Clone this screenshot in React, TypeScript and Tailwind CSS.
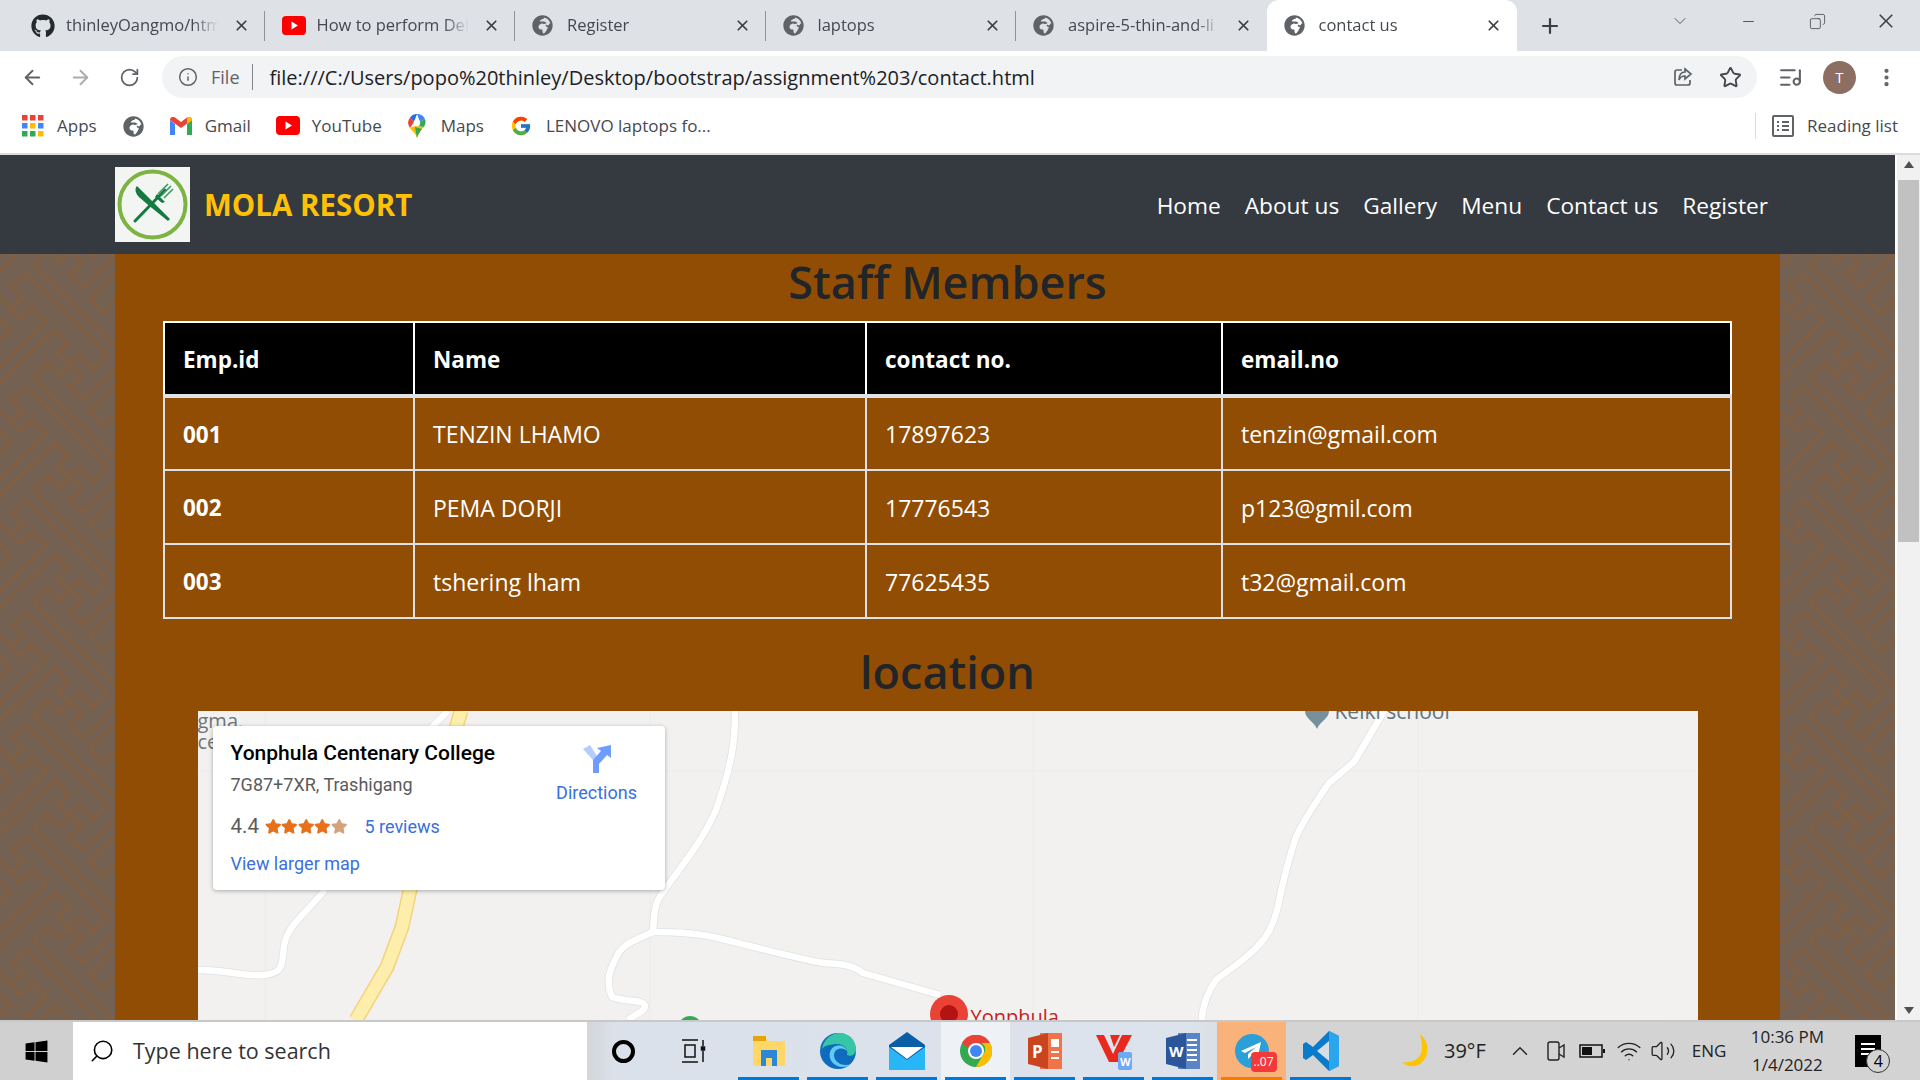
import { ArrowLeft, ArrowRight, ChevronDown, Copy, Info, ListMusic, Minus, MoreVertical, Plus, RotateCw, Search, Star, Volume2, Wifi, X, ChevronUp } from 'lucide-react'
import { FaGithub, FaGlobeAfrica, FaStar, FaWindows } from 'react-icons/fa'
import { FcGoogle } from 'react-icons/fc'
import { VscChromeClose } from 'react-icons/vsc'

const ui = 'font-["Open_Sans",sans-serif]'

const tabs = ['thinleyOangmo/html', 'How to perform Dele', 'Register', 'laptops', 'aspire-5-thin-and-li', 'contact us']

const staff = [
  { id: '001', name: 'TENZIN LHAMO', phone: '17897623', email: 'tenzin@gmail.com' },
  { id: '002', name: 'PEMA DORJI', phone: '17776543', email: 'p123@gmil.com' },
  { id: '003', name: 'tshering lham', phone: '77625435', email: 't32@gmail.com' },
]

const navLinks = ['Home', 'About us', 'Gallery', 'Menu', 'Contact us', 'Register']

const YoutubeIcon = ({ size = 24 }: { size?: number }) => (
  <svg width={size} height={size * 0.8} viewBox="0 0 24 19">
    <rect width="24" height="19" rx="4" fill="#f00" />
    <path d="M9.5 5.5l6.5 4-6.5 4z" fill="#fff" />
  </svg>
)

const TabFavicon = ({ index }: { index: number }) => {
  if (index === 0) return <FaGithub size={24} className="text-[#24292e]" />
  if (index === 1) return <YoutubeIcon />
  return <FaGlobeAfrica size={21} className="text-[#5f6368]" />
}

const ChromeTabs = () => (
  <div className="flex h-[51px] shrink-0 items-center bg-[#dee1e6] pl-[14px]">
    {tabs.map((tab, i) => {
      const active = i === 5
      return (
        <div
          key={tab}
          className={`relative flex h-full w-[250.5px] items-center pl-[17px] pr-[15px] ${active ? 'rounded-t-xl bg-white' : ''}`}
        >
          <div className="flex w-[35px] shrink-0 items-center">
            <TabFavicon index={i} />
          </div>
          <span className="w-[155px] overflow-hidden whitespace-nowrap text-[16.5px] text-[#45494f] [mask-image:linear-gradient(90deg,#000_82%,transparent_98%)]">
            {tab}
          </span>
          <X size={17} strokeWidth={2.4} className="ml-auto text-[#3c4043]" />
          {i < 4 && <div className="absolute right-0 top-[11px] h-[30px] w-px bg-[#8f9296]" />}
        </div>
      )
    })}
    <Plus size={24} strokeWidth={2.2} className="ml-[21px] text-[#3c4043]" />
    <div className="ml-auto flex items-center pb-[9px] text-[#3c4043]">
      <ChevronDown size={20} strokeWidth={1} className="mr-[50px]" />
      <Minus size={17} strokeWidth={1.2} className="mr-[52px]" />
      <Copy size={17} strokeWidth={1.1} className="mr-[50px] -scale-x-100" />
      <VscChromeClose size={20} className="mr-[24px]" />
    </div>
  </div>
)

const AddressBar = () => (
  <div className="flex h-[52px] shrink-0 items-center bg-white text-[#5f6368]">
    <ArrowLeft size={23} className="ml-[21px]" strokeWidth={2} />
    <ArrowRight size={23} className="ml-[25px] text-[#a8abaf]" strokeWidth={2} />
    <RotateCw size={21} className="ml-[27px]" strokeWidth={2} />
    <div className="ml-[22px] flex h-[42px] w-[1595px] items-center rounded-full bg-[#f1f3f4]">
      <Info size={20} strokeWidth={1.8} className="ml-[16px]" />
      <span className="ml-[13px] text-[18px] text-[#5f6368]">File</span>
      <div className="ml-[12px] h-[26px] w-px bg-[#80868b]" />
      <span className="ml-[17px] pt-[2px] text-[20px] text-[#202124]">
        file:///C:/Users/popo%20thinley/Desktop/bootstrap/assignment%203/contact.html
      </span>
      <svg viewBox="0 0 24 24" width="24" height="24" fill="none" stroke="currentColor" strokeWidth="1.7" className="ml-auto">
        <path d="M11 5H6a2 2 0 0 0-2 2v11a2 2 0 0 0 2 2h11a2 2 0 0 0 2-2v-3" />
        <path d="M14 4l6 5-6 5v-3c-3 0-5 1-6 4 0-5 2-8 6-8z" />
      </svg>
      <Star size={23} strokeWidth={2} className="ml-[24px] mr-[15px] text-[#45494f]" />
    </div>
    <ListMusic size={25} strokeWidth={2} className="ml-[21px]" />
    <div className="ml-[20px] flex h-[33px] w-[33px] items-center justify-center rounded-full bg-[#8d6e63] text-[15px] text-white">T</div>
    <MoreVertical size={23} className="ml-[19px]" strokeWidth={2.4} />
  </div>
)

const AppsIcon = () => (
  <svg width="22" height="22" viewBox="0 0 22 22">
    {[
      ['#ea4335', '#ea4335', '#ea4335'],
      ['#4285f4', '#fbbc04', '#4285f4'],
      ['#34a853', '#34a853', '#fbbc04'],
    ].map((row, y) =>
      row.map((c, x) => <rect key={`${x}${y}`} x={x * 8} y={y * 8} width="5.5" height="5.5" fill={c} />),
    )}
  </svg>
)

const GmailIcon = () => (
  <svg width="22" height="18" viewBox="0 0 22 18">
    <path d="M0 3v15h5V7z" fill="#4285f4" />
    <path d="M17 7v11h5V3z" fill="#34a853" />
    <path d="M0 3l11 8 11-8c0-3-3-4-5-2.5L11 5 5 .5C3-1 0 0 0 3z" fill="#ea4335" />
    <path d="M17 .5V7l5-4c0-3-3-4-5-2.5z" fill="#fbbc04" />
  </svg>
)

const MapsIcon = () => (
  <svg width="18" height="24" viewBox="0 0 18 24">
    <path d="M9 0a9 9 0 0 0-7 3.4L6 8z" fill="#1a73e8" />
    <path d="M2 3.4A9 9 0 0 0 2 14l4-6z" fill="#ea4335" />
    <path d="M9 0a9 9 0 0 1 8 5l-5 3z" fill="#4285f4" />
    <path d="M17 5a9 9 0 0 1-1 8L7 12l5-4z" fill="#34a853" />
    <path d="M2 14c3 4 6 6 7 10 1-4 3-6 5-9l2-2-9-1z" fill="#fbbc04" />
    <path d="M9 24c1-4 3-6 5-9L7 13z" fill="#34a853" />
    <circle cx="9" cy="9" r="3.2" fill="#fff" />
  </svg>
)

const Bookmarks = () => (
  <div className="flex h-[52px] shrink-0 items-center border-b-2 border-[#dcdcdc] pb-[4px] text-[17px] text-[#45494f]">
    <div className="ml-[22px]"><AppsIcon /></div>
    <span className="ml-[13px]">Apps</span>
    <FaGlobeAfrica size={21} className="ml-[26px] text-[#5f6368]" />
    <div className="ml-[26px]"><GmailIcon /></div>
    <span className="ml-[13px]">Gmail</span>
    <div className="ml-[25px]"><YoutubeIcon /></div>
    <span className="ml-[12px]">YouTube</span>
    <div className="ml-[26px]"><MapsIcon /></div>
    <span className="ml-[15px]">Maps</span>
    <FcGoogle size={22} className="ml-[26px]" />
    <span className="ml-[14px]">LENOVO laptops fo...</span>
    <div className="ml-auto h-[26px] w-px bg-[#dadce0]" />
    <svg width="22" height="24" viewBox="0 0 22 24" fill="none" stroke="#5f6368" strokeWidth="2" className="ml-[16px]">
      <rect x="1" y="2" width="20" height="20" rx="1" />
      <path d="M5 8h2M10 8h7M5 12h2M10 12h7M5 16h2M10 16h7" />
    </svg>
    <span className="ml-[13px] mr-[22px]">Reading list</span>
  </div>
)

const LogoMark = () => (
  <svg width="75" height="75" viewBox="0 0 75 75" className="shrink-0">
    <rect width="75" height="75" fill="#f3f5f3" />
    <circle cx="37.5" cy="37.5" r="33" fill="none" stroke="#7cb342" strokeWidth="4" />
    <path d="M55 52L22 19c-3 3-1 8 2 11l8 7 21 17z" fill="#137a42" />
    <path d="M20 54l30-31" stroke="#137a42" strokeWidth="3" strokeLinecap="round" />
    <path d="M46 29l10-10M49 31l9-9M43 27l10-10" stroke="#3c9a62" strokeWidth="1.6" />
    <path d="M42 27l8 8-3 1-7-6z" fill="#137a42" />
  </svg>
)

const Navbar = () => (
  <nav className="flex h-[99px] items-center bg-[#343a40] pl-[115px] pr-[127px]">
    <LogoMark />
    <span className="ml-[14px] mt-[2px] text-[29.5px] font-bold text-[#ffc107]">MOLA RESORT</span>
    <ul className="ml-auto mt-[3px] flex gap-[24px] text-[22.7px] text-white">
      {navLinks.map((l) => (
        <li key={l}>{l}</li>
      ))}
    </ul>
  </nav>
)

const keyLines = [
  'M-5 390L165 228 207 268 172 298 245 365 208 398 252 437 360 329',
  'M78 60L37 100 70 130 35 165 -5 125',
  'M35 165L60 195 97 158 138 200 -5 343',
  'M100 370L143 327 178 362 240 300 278 345 322 300 78 60',
  'M100 370L360 630',
  'M360 45L270 130 310 178 360 128',
  'M-5 190L30 225 -5 260',
].join(' ')

const patternRows = [-2, -1, 0, 1, 2, 3, 4, 5, 6, 7]

const SidePattern = ({ shift }: { shift: number }) => (
  <svg className="h-full w-[115px] shrink-0 bg-[#746152]" aria-hidden="true">
    <g fill="none" stroke="#835f42" strokeWidth="9">
      {patternRows.map((row) => (
        <path key={row} d={keyLines} transform={`translate(${shift} ${row * 112.67}) scale(0.3333)`} />
      ))}
    </g>
  </svg>
)

const StaffTable = () => (
  <table className="w-[1569px] table-fixed border-collapse border-2 border-white text-[23px] text-white">
    <colgroup>
      <col className="w-[250px]" />
      <col className="w-[452px]" />
      <col className="w-[356px]" />
      <col />
    </colgroup>
    <thead>
      <tr className="h-[74px] border-b-4 border-[#dee2e6] bg-black">
        {['Emp.id', 'Name', 'contact no.', 'email.no'].map((h) => (
          <th key={h} className="border-2 border-white px-[18px] pt-[2px] text-left text-[22.5px] font-bold">{h}</th>
        ))}
      </tr>
    </thead>
    <tbody>
      {staff.map((s) => (
        <tr key={s.id} className="h-[74px]">
          <th className="border-2 border-[#dee2e6] px-[18px] pt-[2px] text-left text-[22.5px] font-bold">{s.id}</th>
          <td className="border-2 border-[#dee2e6] px-[18px] pt-[2px]">{s.name}</td>
          <td className="border-2 border-[#dee2e6] px-[18px] pt-[2px]">{s.phone}</td>
          <td className="border-2 border-[#dee2e6] px-[18px] pt-[2px]">{s.email}</td>
        </tr>
      ))}
    </tbody>
  </table>
)

const whiteRoads = [
  'M250 0l-20 20',
  'M127 179C105 205 89 215 86 235C84 255 85 262 66 264C50 266 20 258 0 259',
  'M537 0C537 30 535 50 518 99C500 140 470 170 460 189C455 200 456 210 455 221C440 228 425 232 419 245C412 258 407 270 414 286C425 291 447 288 447 295C447 300 438 303 430 309',
  'M455 221C480 221 500 222 520 227C560 237 610 250 626 252C645 253 655 254 665 262L742 284',
  'M1186 0L1156 51 1131 72C1115 95 1105 110 1098 126C1090 150 1085 170 1080 195C1075 215 1070 225 1058 237C1040 255 1025 262 1018 269C1010 280 1004 296 1004 309',
]

const MapRoads = () => (
  <svg className="h-full w-full" viewBox="0 0 1500 309" preserveAspectRatio="none">
    <path d="M0 60h1500M67 0v309M452 0v309M835 0v309M1220 0v309" stroke="#ebebe9" strokeWidth="1" fill="none" />
    <path d="M263 0L212 179 204 216 189 256 158 309" fill="none" stroke="#f5d27e" strokeWidth="15" />
    <path d="M263 0L212 179 204 216 189 256 158 309" fill="none" stroke="#fdeeab" strokeWidth="12" />
    {whiteRoads.map((d) => (
      <path key={d} d={d} fill="none" stroke="#dfe1e3" strokeWidth="8" strokeLinejoin="round" />
    ))}
    {whiteRoads.map((d) => (
      <path key={d} d={d} fill="none" stroke="#fff" strokeWidth="6.5" strokeLinejoin="round" />
    ))}
  </svg>
)

const MapPins = () => (
  <>
    <span className="absolute left-0 top-[-1px] text-[20px] leading-[21px] text-[#70757a]">gma.<br />ce</span>
    <svg width="24" height="20" viewBox="0 0 24 20" className="absolute left-[1107px] top-0">
      <path d="M0 0h24c0 8-9 10-12 18C9 10 0 8 0 0z" fill="#78909c" />
    </svg>
    <span className="absolute left-[1137px] top-[-15px] text-[21px] text-[#5f7480]">Keiki school</span>
    <div className="absolute left-[480px] top-[305px] h-[12px] w-[24px] rounded-t-full bg-[#34a853]" />
    <div className="absolute left-[732px] top-[284px] h-[38px] w-[38px] rounded-full bg-[#ea4335]">
      <div className="mx-auto mt-[10px] h-[18px] w-[18px] rounded-full bg-[#b31412]" />
    </div>
    <span className="absolute left-[773px] top-[291px] text-[20px] text-[#c5221f]">Yonphula</span>
  </>
)

const InfoCard = () => (
  <div className="absolute left-[15px] top-[15px] flex h-[164px] w-[452px] rounded-sm bg-white pl-[18px] pt-[14px] font-['Roboto',sans-serif] shadow-[0_1px_4px_rgba(0,0,0,0.3)]">
    <div className="w-[326px]">
      <div className="text-[21px] font-medium leading-[26px] text-black">Yonphula Centenary College</div>
      <div className="mt-[6px] text-[18px] leading-[26px] text-[#5b5b5b]">7G87+7XR, Trashigang</div>
      <div className="mt-[14px] flex h-[28px] items-center">
        <span className="text-[20.5px] text-[#5b5b5b]">4.4</span>
        <div className="ml-[6px] flex text-[#e7711b]">
          {[0, 1, 2, 3].map((s) => <FaStar key={s} size={16.5} />)}
          <FaStar size={16.5} className="text-[#d6a27a]" />
        </div>
        <span className="ml-[17px] text-[18px] text-[#3a6fdc]">5 reviews</span>
      </div>
      <div className="mt-[10px] text-[18px] text-[#3a6fdc]">View larger map</div>
    </div>
    <div className="flex w-[80px] flex-col items-center text-[18px] text-[#3a6fdc]">
      <svg width="28" height="28" viewBox="0 0 28 28" className="mt-[5px]">
        <path d="M0 4l7-4 9 14v14h-6V15z" fill="#b6cdfb" />
        <path d="M10 28V15l8-9-4-3 14-3v13l-4-3-8 9v9z" fill="#6d9eff" />
      </svg>
      <span className="mt-[6px]">Directions</span>
    </div>
  </div>
)

const WinIcon = ({ name }: { name: string }) => {
  switch (name) {
    case 'cortana':
      return <div className="h-[23px] w-[23px] rounded-full border-[4px] border-black" />
    case 'view':
      return (
        <svg width="28" height="26" viewBox="0 0 28 26" fill="none" stroke="#111" strokeWidth="1.5">
          <path d="M1 2h16M1 24h16M4 7h10v12H4zM22 2v6M22 13v11" />
          <rect x="20.5" y="9" width="3" height="3" fill="#111" />
        </svg>
      )
    case 'folder':
      return (
        <svg width="32" height="30" viewBox="0 0 32 30">
          <path d="M0 2h13l3 3h16v25H0z" fill="#ffd767" />
          <path d="M0 0h13v5H0z" fill="#e5a50a" />
          <path d="M8 14h16v16h-5v-8h-6v8H8z" fill="#2b88d8" />
        </svg>
      )
    case 'edge':
      return (
        <svg width="36" height="36" viewBox="0 0 36 36">
          <circle cx="18" cy="18" r="18" fill="#0f6cbd" />
          <path d="M2 16C4 4 14 0 20 0c10 0 16 8 16 16 0 6-5 8-9 6 2-6-4-12-11-11C9 12 5 12 2 16z" fill="#34c6a6" />
          <path d="M14 22c0-6 8-9 13-4-2-7-14-8-17 1-2 8 4 15 13 15 3 0 6-1 8-3-9 3-17-2-17-9z" fill="#62c8f5" />
        </svg>
      )
    case 'mail':
      return (
        <svg width="36" height="38" viewBox="0 0 36 38">
          <path d="M18 0l18 13v25H0V13z" fill="#0a5ea8" />
          <path d="M2 15h32L18 27z" fill="#fff" />
          <path d="M0 15l18 13 18-13v23H0z" fill="#29b6f6" />
        </svg>
      )
    case 'chrome':
      return (
        <svg width="32" height="32" viewBox="0 0 32 32">
          <circle cx="16" cy="16" r="16" fill="#34a853" />
          <path d="M2 8a16 16 0 0 1 28 0H16a8 8 0 0 0-7.5 5z" fill="#ea4335" />
          <path d="M30 8a16 16 0 0 1-14 24l7-12a8 8 0 0 0-1-12z" fill="#fbbc04" />
          <circle cx="16" cy="16" r="8" fill="#fff" />
          <circle cx="16" cy="16" r="6" fill="#4285f4" />
        </svg>
      )
    case 'ppt':
      return (
        <svg width="34" height="36" viewBox="0 0 34 36">
          <path d="M12 0h22v36H12z" fill="#f0734a" />
          <path d="M0 5l20-5v36L0 31z" fill="#c8451f" />
          <path d="M23 6h8v8h-8zM23 18h8v2h-8zM23 24h8v2h-8z" fill="#fff" />
          <text x="4" y="25" fontSize="17" fontWeight="700" fill="#fff" fontFamily="Open Sans">P</text>
        </svg>
      )
    case 'wps':
      return (
        <svg width="36" height="38" viewBox="0 0 36 38">
          <path d="M0 3h8l9 19L26 3h10L22 30h-9z" fill="#e8291c" />
          <path d="M14 3h10l-6 12z" fill="#e8291c" />
          <rect x="22" y="20" width="14" height="18" rx="2" fill="#6fa8f5" />
          <text x="24" y="34" fontSize="11" fontWeight="700" fill="#fff" fontFamily="Open Sans">W</text>
        </svg>
      )
    case 'word':
      return (
        <svg width="34" height="36" viewBox="0 0 34 36">
          <path d="M12 0h22v36H12z" fill="#5b84c4" />
          <path d="M21 7h10M21 12h10M21 17h10M21 22h10M21 27h10" stroke="#fff" strokeWidth="2" />
          <path d="M0 5l20-5v36L0 31z" fill="#2b579a" />
          <text x="3" y="24" fontSize="15" fontWeight="700" fill="#fff" fontFamily="Open Sans">W</text>
        </svg>
      )
    case 'telegram':
      return (
        <div className="relative h-[34px] w-[34px] rounded-full bg-[#2b9fd8]">
          <svg width="34" height="34" viewBox="0 0 34 34">
            <path d="M6 17l20-9-4 19-6-5-3 3v-5l8-7-11 6z" fill="#fff" />
          </svg>
          <span className="absolute left-[16px] top-[18px] flex h-[20px] w-[26px] items-center justify-center rounded bg-[#f23a3a] text-[12px] leading-none text-white">..07</span>
        </div>
      )
    default:
      return (
        <svg width="36" height="40" viewBox="0 0 36 40">
          <path d="M26 0l10 5v30l-10 5-16-16-7 5-3-2V13l3-2 7 5z" fill="#0a7acc" />
          <path d="M26 10L14 20l12 10z" fill="#d7dde4" />
          <path d="M26 0l10 5v30l-10 5z" fill="#2aa7ec" />
        </svg>
      )
  }
}

const apps = [
  { name: 'folder' },
  { name: 'edge' },
  { name: 'mail' },
  { name: 'chrome', active: true },
  { name: 'ppt' },
  { name: 'wps' },
  { name: 'word' },
  { name: 'telegram', hot: true },
  { name: 'vscode' },
]

const Taskbar = () => (
  <div className="flex h-[60px] shrink-0 items-stretch border-t-2 border-[#c8c8c8] bg-[linear-gradient(90deg,#d0d0d0_0%,#d0d0d0_30%,#dbe1ea_32%,#dde3ec_62%,#d4d4d4_67%,#d3d3d3_100%)]">
    <div className="flex w-[73px] items-center justify-center">
      <FaWindows size={25} className="text-black" />
    </div>
    <div className="flex w-[514px] items-center bg-white">
      <Search size={26} strokeWidth={1.5} className="ml-[16px] -scale-x-100 text-black" />
      <span className="ml-[18px] text-[21.5px] text-[#333]">Type here to search</span>
    </div>
    <div className="flex w-[72px] items-center justify-center"><WinIcon name="cortana" /></div>
    <div className="flex w-[72px] items-center justify-center"><WinIcon name="view" /></div>
    <div className="ml-[3px] flex">
      {apps.map((a) => (
        <div
          key={a.name}
          className={`relative flex w-[69px] items-center justify-center ${a.hot ? 'bg-[#f9b27a]' : a.active ? 'bg-[#eef1f5]' : ''}`}
        >
          <WinIcon name={a.name} />
          <div className={`absolute bottom-0 left-[4px] right-[4px] h-[3px] ${a.hot ? 'bg-[#f57c00]' : 'bg-[#0078d7]'}`} />
        </div>
      ))}
    </div>
    <div className="ml-[47px] flex items-center text-[#222]">
      <svg width="30" height="34" viewBox="0 0 30 34">
        <path d="M18 0c8 6 10 18 4 26S6 34 0 28c10 2 20-4 20-14 0-5-1-10-2-14z" fill="#ffc400" />
      </svg>
      <span className="ml-[12px] text-[20px]">39°F</span>
      <ChevronUp size={26} strokeWidth={1.3} className="ml-[21px]" />
      <svg width="20" height="28" viewBox="0 0 20 28" fill="none" stroke="#222" strokeWidth="1.4" className="ml-[13px]">
        <rect x="2" y="5" width="11" height="18" rx="2" />
        <path d="M13 11l5-3v12l-5-3" />
      </svg>
      <svg width="26" height="14" viewBox="0 0 26 14" className="ml-[13px]">
        <rect x="1" y="1" width="22" height="12" fill="none" stroke="#111" strokeWidth="1.5" />
        <rect x="3" y="3" width="10" height="8" fill="#111" />
        <rect x="24" y="5" width="2" height="4" fill="#111" />
      </svg>
      <Wifi size={26} strokeWidth={1.2} className="ml-[11px]" />
      <Volume2 size={26} strokeWidth={1.2} className="ml-[8px]" />
      <span className="ml-[16px] text-[17px]">ENG</span>
      <div className="ml-[16px] flex w-[90px] flex-col items-center text-[17px] leading-[28px]">
        <span>10:36 PM</span>
        <span>1/4/2022</span>
      </div>
      <div className="relative ml-[23px] h-[32px] w-[26px] bg-black">
        <div className="mx-auto mt-[8px] h-[2px] w-[14px] bg-white" />
        <div className="mx-auto mt-[3px] h-[2px] w-[14px] bg-white" />
        <div className="mx-auto mt-[3px] h-[2px] w-[14px] bg-white" />
        <span className="absolute left-[11px] top-[14px] flex h-[24px] w-[24px] items-center justify-center rounded-full border border-[#333] bg-[#d3d3d3] text-[16px] text-black">4</span>
      </div>
    </div>
  </div>
)

export default function App() {
  return (
    <div className={`flex h-screen w-full flex-col overflow-hidden bg-white ${ui}`}>
      <ChromeTabs />
      <AddressBar />
      <Bookmarks />
      <div className="flex min-h-0 flex-1">
        <div className="flex min-w-0 flex-1 flex-col">
          <Navbar />
          <main className="flex min-h-0 flex-1">
            <SidePattern shift={0} />
            <div className="flex min-w-0 flex-1 flex-col items-center bg-[#914d03] text-[#212529]">
              <h1 className="mt-[-3px] h-[70px] text-[45px] font-semibold leading-[62px]">Staff Members</h1>
              <StaffTable />
              <h2 className="mt-[21px] h-[71px] text-[45px] font-semibold leading-[64px]">location</h2>
              <div className="relative min-h-0 w-[1500px] flex-1 overflow-hidden bg-[#f2f1ef]">
                <MapRoads />
                <MapPins />
                <InfoCard />
              </div>
            </div>
            <SidePattern shift={-3} />
          </main>
        </div>
        <div className="flex w-[25px] shrink-0 flex-col items-center border-l-2 border-white bg-[#f1f1f1] py-[6px]">
          <div className="h-0 w-0 border-x-[5px] border-b-[7px] border-x-transparent border-b-[#505050]" />
          <div className="mt-[12px] h-[362px] w-[21px] bg-[#c1c1c1]" />
          <div className="mt-auto h-0 w-0 border-x-[5px] border-t-[7px] border-x-transparent border-t-[#505050]" />
        </div>
      </div>
      <Taskbar />
    </div>
  )
}
